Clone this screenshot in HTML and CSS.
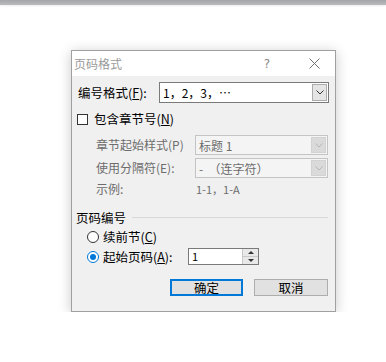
FILE: index.html
```html
<!DOCTYPE html>
<html lang="zh-CN">
<head>
    <meta charset="UTF-8">
    <meta name="viewport" content="width=device-width, initial-scale=1.0">
    <title>页码格式</title>
    <link rel="stylesheet" href="styles.css">
</head>
<body>
    <div class="topbar"></div>

    <div class="dialog">
        <div class="titlebar">
            <span class="title">页码格式</span>
            <span class="help">?</span>
            <span class="close">
                <svg width="11" height="11" viewBox="0 0 11 11"><path d="M0.5 0.5 L10.5 10.5 M10.5 0.5 L0.5 10.5" stroke="#6f6f6f" stroke-width="1" fill="none"/></svg>
            </span>
        </div>

        <div class="content">
            <div class="row row-format">
                <span class="label label-format">编号格式(<u>F</u>):</span>
                <div class="select select-format">
                    <span class="value">1，2，3，…</span>
                    <span class="arrow">
                        <svg width="8" height="5" viewBox="0 0 8 5"><path d="M0.5 0.5 L4 4 L7.5 0.5" stroke="#333" fill="none"/></svg>
                    </span>
                </div>
            </div>

            <div class="row row-check">
                <span class="checkbox"></span>
                <span class="check-text">包含章节号(<u>N</u>)</span>
            </div>

            <div class="row row-sub row-style">
                <span class="label label-sub disabled">章节起始样式(P)</span>
                <div class="select select-sub disabled">
                    <span class="value">标题 1</span>
                    <span class="arrow">
                        <svg width="8" height="5" viewBox="0 0 8 5"><path d="M0.5 0.5 L4 4 L7.5 0.5" stroke="#b5b5b5" fill="none"/></svg>
                    </span>
                </div>
            </div>

            <div class="row row-sub row-sep">
                <span class="label label-sub disabled">使用分隔符(E):</span>
                <div class="select select-sub disabled">
                    <span class="value">-&nbsp;&nbsp;（连字符）</span>
                    <span class="arrow">
                        <svg width="8" height="5" viewBox="0 0 8 5"><path d="M0.5 0.5 L4 4 L7.5 0.5" stroke="#b5b5b5" fill="none"/></svg>
                    </span>
                </div>
            </div>

            <div class="row row-sub row-example">
                <span class="label label-sub disabled">示例:</span>
                <span class="example disabled">1-1，1-A</span>
            </div>

            <div class="row row-group">
                <span class="group-title">页码编号</span>
                <span class="group-line"></span>
            </div>

            <div class="row row-radio row-continue">
                <span class="radio"></span>
                <span class="radio-text">续前节(<u>C</u>)</span>
            </div>

            <div class="row row-radio row-start">
                <span class="radio checked"></span>
                <span class="radio-text radio-start">起始页码(<u>A</u>):</span>
                <div class="spin">
                    <span class="spin-value">1</span>
                    <span class="spin-buttons">
                        <span class="spin-up"></span>
                        <span class="spin-down"></span>
                    </span>
                </div>
            </div>

            <div class="row row-buttons">
                <button class="btn btn-ok">确定</button>
                <button class="btn">取消</button>
            </div>
        </div>
    </div>
</body>
</html>
```

FILE: styles.css
```css
body {
    margin: 0;
    padding: 0;
    background: #fff;
    font-family: "Noto Sans CJK SC", "Liberation Sans", sans-serif;
    font-size: 12px;
    color: #000;
}

.topbar {
    height: 5px;
    background: linear-gradient(#a3a6a9, #b9bbbd);
    box-shadow: 0 1px 2px rgba(0, 0, 0, 0.08);
}

.dialog {
    margin: 45px 0 0 71px;
    width: 263px;
    height: 260px;
    border: 1px solid #a0a0a0;
    background: #f0f0f0;
    box-shadow: 0 2px 12px rgba(0, 0, 0, 0.22);
}

.titlebar {
    height: 25px;
    background: #fff;
    display: flex;
    align-items: center;
}

.title {
    flex: 1;
    padding-left: 2px;
    color: #9a9a9a;
    font-size: 12px;
    line-height: 14px;
}

.help {
    width: 20px;
    margin-right: 27px;
    text-align: center;
    color: #8a8a8a;
    font-family: "DejaVu Sans", sans-serif;
    font-size: 12px;
}

.close {
    width: 20px;
    margin-right: 11px;
    display: flex;
    justify-content: center;
}

.content {
    display: flex;
    flex-direction: column;
}

.row {
    display: flex;
    align-items: center;
}

u {
    text-decoration: underline;
    text-underline-offset: 1px;
}

.label {
    line-height: 14px;
    white-space: nowrap;
}

.disabled {
    color: #6d6d6d;
}

/* 编号格式 */
.row-format {
    margin-top: 6px;
    height: 21px;
    padding-left: 6px;
}

.label-format {
    width: 81px;
    font-size: 12.5px;
}

.select {
    display: flex;
    box-sizing: border-box;
    border: 1px solid #7a7a7a;
    background: #fff;
}

.select-format {
    width: 170px;
    height: 21px;
}

.select .value {
    flex: 1;
    padding-left: 3px;
    line-height: 19px;
    white-space: nowrap;
}

.select .arrow {
    width: 15px;
    margin: 1px;
    box-sizing: border-box;
    border: 1px solid #acacac;
    background: #e5e5e5;
    display: flex;
    align-items: center;
    justify-content: center;
}

.select.disabled {
    border-color: #c4c4c4;
    background: #f4f4f4;
}

.select.disabled .arrow {
    border-color: #d2d2d2;
    background: #dadada;
}

/* 包含章节号 */
.row-check {
    margin-top: 8px;
    height: 16px;
    padding-left: 5px;
}

.checkbox {
    width: 11px;
    height: 11px;
    box-sizing: border-box;
    border: 1px solid #333;
    background: #fff;
    margin-right: 6px;
}

.check-text {
    font-size: 12.5px;
    line-height: 14px;
}

/* 章节子选项 */
.row-sub {
    padding-left: 24px;
}

.label-sub {
    width: 99px;
}

.select-sub {
    width: 133px;
    height: 20px;
}

.row-style {
    margin-top: 8px;
    height: 20px;
}

.row-sep {
    margin-top: 3px;
    height: 20px;
}

.row-example {
    margin-top: 4px;
    height: 14px;
}

.example {
    font-size: 11px;
    padding-left: 1px;
}

/* 页码编号 */
.row-group {
    margin-top: 15px;
    height: 14px;
    padding-left: 4px;
}

.group-title {
    font-size: 12.5px;
    line-height: 14px;
    width: 56px;
}

.group-line {
    width: 196px;
    height: 0;
    border-top: 1px solid #d8d8d8;
    margin-top: -1px;
}

.row-radio {
    padding-left: 15px;
}

.row-continue {
    margin-top: 4px;
    height: 16px;
}

.row-start {
    margin-top: 3px;
    height: 17px;
}

.radio {
    width: 12px;
    height: 12px;
    box-sizing: border-box;
    border: 1px solid #333;
    border-radius: 50%;
    background: #fff;
    margin-right: 4px;
    position: relative;
}

.radio.checked {
    border-color: #0078d7;
}

.radio.checked::after {
    content: "";
    position: absolute;
    left: 2px;
    top: 2px;
    width: 6px;
    height: 6px;
    border-radius: 50%;
    background: #0078d7;
}

.radio-text {
    font-size: 12.5px;
    line-height: 14px;
    white-space: nowrap;
}

.radio-start {
    width: 85px;
}

.spin {
    display: flex;
    width: 71px;
    height: 17px;
    box-sizing: border-box;
    border: 1px solid #7a7a7a;
    background: #fff;
}

.spin-value {
    flex: 1;
    padding-left: 3px;
    line-height: 15px;
    font-size: 11px;
}

.spin-buttons {
    width: 15px;
    display: flex;
    flex-direction: column;
    border-left: 1px solid #c8c8c8;
}

.spin-up,
.spin-down {
    flex: 1;
    background: #e8e8e8;
    display: flex;
    justify-content: center;
    align-items: center;
}

.spin-up {
    border-bottom: 1px solid #c8c8c8;
}

.spin-up::after {
    content: "";
    border-left: 3px solid transparent;
    border-right: 3px solid transparent;
    border-bottom: 3px solid #333;
}

.spin-down::after {
    content: "";
    border-left: 3px solid transparent;
    border-right: 3px solid transparent;
    border-top: 3px solid #333;
}

/* 按钮 */
.row-buttons {
    margin-top: 14px;
    padding-left: 98px;
    gap: 11px;
}

.btn {
    width: 74px;
    height: 17px;
    box-sizing: border-box;
    padding: 0;
    border: 1px solid #adadad;
    background: #e1e1e1;
    font-family: "Noto Sans CJK SC", sans-serif;
    font-size: 12.5px;
    line-height: 13px;
    color: #000;
}

.btn-ok {
    width: 73px;
    border: 2px solid #0078d7;
}
```
